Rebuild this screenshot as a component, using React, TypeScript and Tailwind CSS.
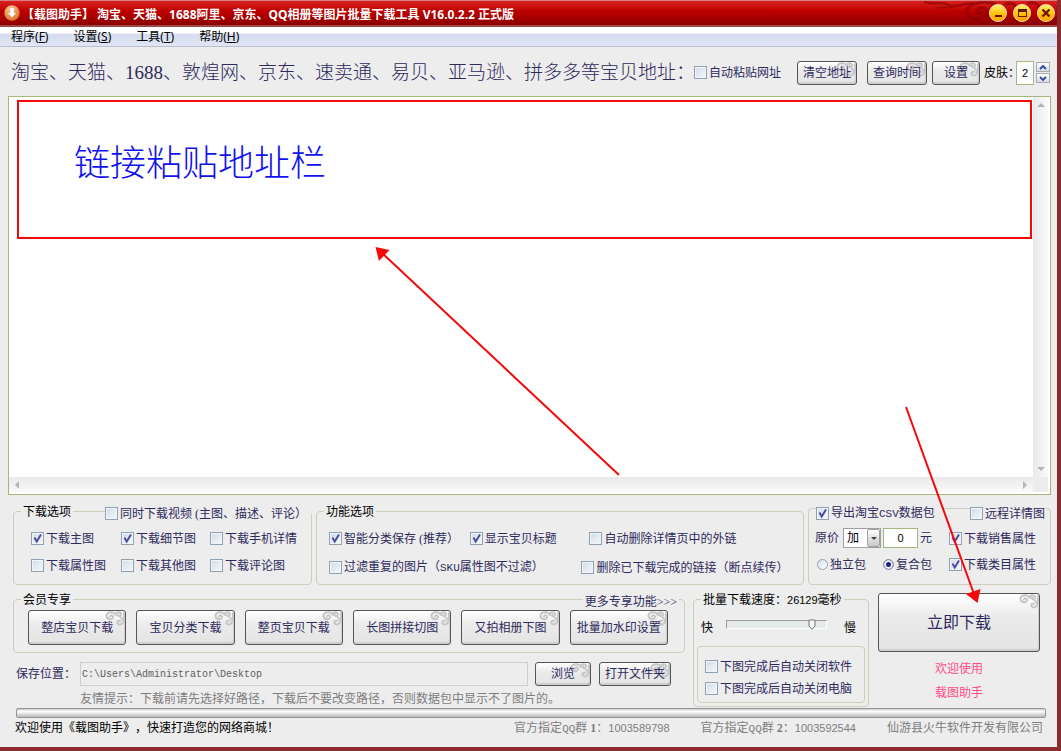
import React, { useState } from "react";

const FONT =
  "font-['Liberation_Serif','Noto_Sans_CJK_SC',sans-serif]";
const UI_FONT = "font-['Noto_Sans','Noto_Sans_CJK_SC',sans-serif]";

function Mono({ children }: { children: React.ReactNode }) {
  return <span className="font-['Liberation_Mono',monospace] text-[11px]">{children}</span>;
}

function Num({ children }: { children: React.ReactNode }) {
  return <span className="font-['Liberation_Sans',sans-serif] text-[11px]">{children}</span>;
}

function Check({
  children,
  on = false,
  className = "",
}: {
  children: React.ReactNode;
  on?: boolean;
  className?: string;
}) {
  return (
    <label className={`flex items-center gap-[2px] whitespace-nowrap leading-4 text-[#2e2a5c] ${className}`}>
      <span className="relative block size-[13px] shrink-0">
        <input
          type="checkbox"
          defaultChecked={on}
          className="peer block size-[13px] appearance-none border border-[#8fa1b3] bg-linear-to-br from-[#cfdce8] to-[#f6f8fb] shadow-[inset_0_0_0_1px_#f2f4f6]"
        />
        <svg
          viewBox="0 0 13 13"
          className="pointer-events-none absolute inset-0 hidden size-[13px] peer-checked:block"
        >
          <path d="M3.5 5.5 L5.7 9.5 L10 2.5" fill="none" stroke="#4b4a9c" strokeWidth="1.9" />
        </svg>
      </span>
      <span className="pt-px">{children}</span>
    </label>
  );
}

function Radio({ children, on = false }: { children: React.ReactNode; on?: boolean }) {
  return (
    <label className="flex items-center gap-px whitespace-nowrap leading-4 text-[#2e2a5c]">
      <input
        type="radio"
        name="package"
        defaultChecked={on}
        className="m-px size-[11px] shrink-0 appearance-none rounded-full border border-[#8fa1b3] bg-linear-to-br from-[#d5e0ea] to-white checked:bg-none checked:bg-[#23227a] checked:shadow-[inset_0_0_0_2px_#eef1f5]"
      />
      <span className="pt-px">{children}</span>
    </label>
  );
}

function Clouds() {
  return (
    <svg viewBox="0 0 20 15" className="absolute top-0 right-0 h-[15px] w-5" aria-hidden="true">
      <g fill="none" stroke="#c6c6c6" strokeWidth="2" strokeLinecap="round">
        <path d="M11 4 C9.5 0.5 3 0 1.5 4 C1 8.500 7 9.500 8 6.500 C8.500 4.200 5.500 3.500 5 5.500" />
        <path d="M10.500 3 C11.500 0.500 16 0.500 16 3.500 C15.500 6 12.500 5.500 13.200 3.500" />
        <path d="M18.800 2.500 C19.500 7 19 13 15 13.500 C11 13 12 8.800 15.200 9.800" />
        <path d="M16 6.500 L17.500 8.500" />
      </g>
    </svg>
  );
}

function Btn({ children, className = "" }: { children: React.ReactNode; className?: string }) {
  return (
    <button
      type="button"
      className={`relative flex items-center justify-center overflow-hidden whitespace-nowrap rounded-[3px] border border-[#555] bg-linear-to-b from-white via-[#ebebeb] via-40% to-[#e4e4e4] text-[#2e2a5c] shadow-[inset_-1px_-2px_1px_#cfcfcf] ${className}`}
    >
      <Clouds />
      <span className="relative">{children}</span>
    </button>
  );
}

function Group({
  label,
  header,
  children,
  className = "",
}: {
  label: string;
  header: React.ReactNode;
  children: React.ReactNode;
  className?: string;
}) {
  return (
    <fieldset
      aria-label={label}
      className={`flex min-w-0 flex-col rounded-[4px] border border-[#cccfba] ${className}`}
    >
      <div className="-mt-2 flex h-4 items-center leading-4">{header}</div>
      {children}
    </fieldset>
  );
}

function Legend({ children }: { children: React.ReactNode }) {
  return <span className="ml-[7px] bg-[#ededed] px-[2px] whitespace-nowrap text-black">{children}</span>;
}

function TitleBar() {
  const round =
    "flex size-[18px] items-center justify-center rounded-full border border-[#ffe9a0] bg-linear-to-b from-[#fff06a] via-[#ffc400] to-[#ff9d00]";
  return (
    <header
      className={`relative -mr-1 flex h-[27px] items-center overflow-hidden rounded-tr-[5px] border-t border-b-2 border-t-[#d98080] border-b-[#9b4a4a] bg-linear-to-b from-[#d92020] via-[#c00000] via-40% to-[#8c0000] pr-[6px] pl-1 text-xs font-bold text-white ${UI_FONT}`}
    >
      <svg viewBox="0 0 16 16" className="size-4 shrink-0" aria-hidden="true">
        <defs>
          <radialGradient id="orb" cx="0.4" cy="0.25" r="0.8">
            <stop offset="0" stopColor="#f8c9a0" />
            <stop offset="1" stopColor="#dd6a1c" />
          </radialGradient>
        </defs>
        <circle cx="8" cy="8" r="7.700" fill="url(#orb)" />
        <path d="M6.300 3 H9.700 V8 H12 L8 12.500 L4 8 H6.300 Z" fill="#fff" />
      </svg>
      <h1 className="ml-[2px] pt-[3px] whitespace-nowrap">
        【载图助手】 淘宝、天猫、1688阿里、京东、QQ相册等图片批量下载工具 V16.0.2.2 正式版
      </h1>
      <svg viewBox="0 0 140 26" className="absolute top-0 right-0 h-[26px] w-[140px]" aria-hidden="true">
        <g fill="none" stroke="#850000" strokeWidth="3" strokeLinecap="round" opacity="0.6">
          <path d="M4 1 C12 4 20 0 28 4 C34 8 42 2 52 2" strokeWidth="2.500" />
          <path d="M16 7 C24 5 28 9 36 4" strokeWidth="1.500" />
          <path d="M74 3 C62 -1 44 3 46 12 C48 20 64 19 66 11 C66 5 56 5 56 11 C57 13 60 13 61 11" />
          <path d="M66 14 C70 20 78 22 84 17 M70 25 C74 20 80 21 84 25 M92 25 C98 18 106 20 108 26 M112 20 C118 24 126 24 136 19" />
          <path d="M84 3 C94 0 100 8 94 14 M108 2 C116 0 120 6 118 12" />
        </g>
      </svg>
      <div className="relative ml-auto flex gap-[6px]">
        <button type="button" aria-label="最小化" className={round}>
          <span className="mt-[6px] h-[2px] w-[7px] bg-[#6b1500]" />
        </button>
        <button type="button" aria-label="最大化" className={round}>
          <span className="h-2 w-[9px] border border-t-[3px] border-[#6b1500]" />
        </button>
        <button type="button" aria-label="关闭" className={round}>
          <svg viewBox="0 0 10 10" className="size-[10px]">
            <path d="M1.500 1.500 L8.500 8.500 M8.500 1.500 L1.500 8.500" stroke="#6b1500" strokeWidth="2.300" />
          </svg>
        </button>
      </div>
    </header>
  );
}

function MenuBar() {
  const items = [
    ["程序", "F"],
    ["设置", "S"],
    ["工具", "T"],
    ["帮助", "H"],
  ];
  return (
    <nav
      className={`flex h-5 items-center gap-[25px] border-b border-[#b9bdd0] bg-linear-to-b from-white from-30% via-[#d5dcee] via-40% to-[#e0e6f5] pl-[11px] text-xs text-black ${UI_FONT}`}
    >
      {items.map(([name, key]) => (
        <button key={key} type="button" className="pt-px leading-4">
          {name}(<u>{key}</u>)
        </button>
      ))}
    </nav>
  );
}

function TopRow() {
  return (
    <div className="flex h-[49px] items-center pt-[2px] pr-[7px] pl-[11px]">
      <label
        htmlFor="links"
        className="w-[683px] shrink-0 whitespace-nowrap text-[19px] leading-6 font-light text-[#2e2a5c]"
      >
        淘宝、天猫、1688、敦煌网、京东、速卖通、易贝、亚马逊、拼多多等宝贝地址：
      </label>
      <Check>自动粘贴网址</Check>
      <div className="ml-auto flex items-center">
        <Btn className="h-6 w-[60px]">清空地址</Btn>
        <Btn className="ml-[10px] h-6 w-[60px]">查询时间</Btn>
        <Btn className="ml-[5px] h-6 w-12">设置</Btn>
        <label htmlFor="skin" className="ml-1 w-8 whitespace-nowrap text-black">
          皮肤：
        </label>
        <input
          id="skin"
          defaultValue="2"
          className="h-6 w-[18px] border border-[#a3b87c] bg-white text-center font-['Liberation_Sans',sans-serif] text-[11px] text-black"
        />
        <div className="ml-[2px] flex flex-col gap-px">
          {["M3 5 L6 2 L9 5", "M3 2 L6 5 L9 2"].map((d, i) => (
            <button
              key={d}
              type="button"
              aria-label={i === 0 ? "增加" : "减少"}
              className="flex h-[10px] w-[14px] items-center justify-center border border-[#a9abb3] bg-linear-to-b from-white to-[#d9dbe3]"
            >
              <svg viewBox="0 0 12 7" className="h-[7px] w-3">
                <path d={d} fill="none" stroke="#2b4a9b" strokeWidth="1.800" />
              </svg>
            </button>
          ))}
        </div>
      </div>
    </div>
  );
}

function Tri({ d }: { d: string }) {
  return (
    <svg viewBox="0 0 8 8" className="size-2" aria-hidden="true">
      <path d={d} fill="#b4b4b4" />
    </svg>
  );
}

function LinkBox() {
  return (
    <div className="relative mr-[6px] ml-2 grid min-h-[240px] flex-1 grid-cols-[1fr_17px] grid-rows-[1fr_17px] border border-[#a3b87c] bg-white">
      <textarea id="links" className="block size-full resize-none bg-white p-1 outline-none" />
      <div className="mr-[2px] flex flex-col items-center justify-between bg-linear-to-r from-[#e9e9e9] to-[#fafafa] py-1">
        <Tri d="M0 6 L4 2 L8 6 Z" />
        <Tri d="M0 2 L4 6 L8 2 Z" />
      </div>
      <div className="mb-[2px] flex items-center justify-between bg-linear-to-b from-[#e9e9e9] to-[#fafafa] px-1">
        <Tri d="M6 0 L2 4 L6 8 Z" />
        <Tri d="M2 0 L6 4 L2 8 Z" />
      </div>
      <div className="mr-[2px] mb-[2px] bg-[#ededed]" />
      <div className="pointer-events-none absolute top-[3px] right-[18px] left-2 flex h-[139px] border-2 border-[#f40808] pt-10 pl-[55px]">
        <span className="whitespace-nowrap text-4xl leading-11 font-light text-[#1010f0]">链接粘贴地址栏</span>
      </div>
    </div>
  );
}

function Options() {
  return (
    <div className="mt-4 mr-[6px] ml-[13px] grid h-[74px] grid-cols-[299fr_488fr_243fr] gap-1">
      <Group
        label="下载选项"
        header={
          <>
            <Legend>下载选项</Legend>
            <Check className="mt-[2px] ml-8 bg-[#ededed] pr-1">同时下载视频 (主图、描述、评论）</Check>
          </>
        }
      >
        <div className="mt-[10px] grid grid-cols-[90fr_89fr_101fr] gap-y-[10px] pl-[17px]">
          <Check on>下载主图</Check>
          <Check on>下载细节图</Check>
          <Check>下载手机详情</Check>
          <Check>下载属性图</Check>
          <Check>下载其他图</Check>
          <Check>下载评论图</Check>
        </div>
      </Group>

      <Group label="功能选项" header={<Legend>功能选项</Legend>}>
        <div className="mt-[10px] grid grid-cols-[141fr_120fr_214fr] pl-3">
          <Check on>智能分类保存 (推荐）</Check>
          <Check on>显示宝贝标题</Check>
          <Check>自动删除详情页中的外链</Check>
        </div>
        <div className="mt-[11px] grid grid-cols-[253fr_222fr] pl-3">
          <Check>
            过滤重复的图片（<Mono>SKU</Mono>属性图不过滤）
          </Check>
          <Check>删除已下载完成的链接（断点续传）</Check>
        </div>
      </Group>

      <Group
        label="导出选项"
        className="-mt-[3px]"
        header={
          <div className="mt-[8px] flex w-full justify-between pr-[5px] pl-[7px]">
            <Check on className="bg-[#ededed] pr-2">
              导出淘宝<Mono>CSV</Mono>数据包
            </Check>
            <Check className="bg-[#ededed]">远程详情图</Check>
          </div>
        }
      >
        <div className="mt-[11px] flex h-5 items-center pr-[14px] pl-[6px] text-[#2e2a5c]">
          <label htmlFor="op" className="whitespace-nowrap">
            原价
          </label>
          <span className="relative ml-1 block">
            <select
              id="op"
              className="block h-5 w-[38px] appearance-none border border-[#9aa0a8] bg-white pl-[3px] text-xs text-black"
            >
              <option>加</option>
              <option>减</option>
            </select>
            <span className="pointer-events-none absolute top-px right-px flex h-[18px] w-[13px] items-center justify-center rounded-[2px] border border-[#a0a0a0] bg-linear-to-b from-white to-[#c9c9c9]">
              <svg viewBox="0 0 6 3" className="h-[3px] w-[6px]">
                <path d="M0 0 H6 L3 3 Z" fill="#444" />
              </svg>
            </span>
          </span>
          <input
            aria-label="金额"
            defaultValue="0"
            className="ml-[2px] h-5 w-[35px] border border-[#a3b87c] bg-white text-center font-['Liberation_Sans',sans-serif] text-[11px] text-black"
          />
          <span className="ml-[2px]">元</span>
          <Check on className="ml-auto">
            下载销售属性
          </Check>
        </div>
        <div className="mt-[8px] flex items-center pr-[14px] pl-[7px]">
          <Radio>独立包</Radio>
          <span className="ml-4">
            <Radio on>复合包</Radio>
          </span>
          <Check on className="ml-auto">
            下载类目属性
          </Check>
        </div>
      </Group>
    </div>
  );
}

function Members() {
  const names = ["整店宝贝下载", "宝贝分类下载", "整页宝贝下载", "长图拼接切图", "又拍相册下图", "批量加水印设置"];
  return (
    <div className="flex min-w-0 flex-col">
      <Group
        label="会员专享"
        header={
          <>
            <Legend>会员专享</Legend>
            <a href="#more" className="mt-1 mr-[5px] ml-auto bg-[#ededed] px-[2px] whitespace-nowrap text-[#2e2a5c]">
              更多专享功能&gt;&gt;&gt;
            </a>
          </>
        }
      >
        <div className="mt-[2px] grid grid-cols-6 gap-[10px] pr-4 pb-[7px] pl-[14px]">
          {names.map((n) => (
            <Btn key={n} className="h-[35px]">
              {n}
            </Btn>
          ))}
        </div>
      </Group>
      <div className="mt-[9px] flex items-center pr-[14px] pl-[3px]">
        <label htmlFor="path" className="w-16 shrink-0 whitespace-nowrap text-[#2e2a5c]">
          保存位置：
        </label>
        <input
          id="path"
          readOnly
          defaultValue="C:\Users\Administrator\Desktop"
          className="h-6 min-w-0 flex-1 border border-[#cfcfcf] bg-[#ededed] px-px font-['Liberation_Mono',monospace] text-[10px] text-[#606060]"
        />
        <Btn className="ml-[7px] h-6 w-14">浏览</Btn>
        <Btn className="ml-2 h-6 w-[72px]">打开文件夹</Btn>
      </div>
      <p className="mt-[5px] ml-[67px] leading-4 whitespace-nowrap text-[#7d7d7d]">
        友情提示：下载前请先选择好路径，下载后不要改变路径，否则数据包中显示不了图片的。
      </p>
    </div>
  );
}

function Speed() {
  const [speed, setSpeed] = useState(87);
  return (
    <Group
      label="批量下载速度"
      header={
        <Legend>
          批量下载速度：<Num>26129</Num>毫秒
        </Legend>
      }
    >
      <div className="mt-3 flex items-center pr-3 pl-[7px] text-black">
        <span>快</span>
        <div className="relative mx-[13px] h-4 min-w-0 flex-1">
          <input
            type="range"
            aria-label="下载速度"
            value={speed}
            onChange={(e) => setSpeed(Number(e.target.value))}
            className="block h-[9px] w-full appearance-none border border-t-[#9a9a9a] border-r-white border-b-white border-l-[#9a9a9a] bg-[#e4e9ea] [&::-webkit-slider-thumb]:appearance-none [&::-webkit-slider-thumb]:opacity-0"
          />
          <svg
            viewBox="0 0 8 11"
            className="pointer-events-none absolute -top-px -ml-[6px] h-[11px] w-2"
            style={{ left: `${speed}%` }}
          >
            <path d="M1 1 H7 V7 L4 10.300 L1 7 Z" fill="#f4f4f4" stroke="#777" />
          </svg>
        </div>
        <span className="ml-1">慢</span>
      </div>
      <div className="mx-[3px] mt-auto mb-[3px] flex h-[57px] flex-col gap-[5px] rounded-[4px] border border-[#cccfba] pt-[11px] pl-[7px]">
        <Check>下图完成后自动关闭软件</Check>
        <Check>下图完成后自动关闭电脑</Check>
      </div>
    </Group>
  );
}

export default function App() {
  return (
    <div
      className={`relative flex min-h-screen flex-col overflow-hidden border-r-4 border-b-4 border-[#8c2a2e] bg-[#ededed] text-xs [text-spacing-trim:space-all] ${FONT}`}
    >
      <TitleBar />
      <MenuBar />
      <TopRow />
      <LinkBox />
      <Options />
      <div className="mt-[14px] mr-[6px] ml-[13px] grid h-[105px] grid-cols-[672fr_176fr_174fr] gap-2">
        <Members />
        <Speed />
        <div className="-mt-[6px] flex flex-col pr-[11px] pl-px">
          <Btn className="h-[59px] text-base">立即下载</Btn>
          <p className="mt-[9px] text-center leading-4 text-[#ff4d88]">欢迎使用</p>
          <p className="mt-2 text-center leading-4 text-[#ff4d88]">载图助手</p>
        </div>
      </div>
      <div className="mt-1 mr-[11px] ml-4 h-[10px] rounded-[2px] border border-[#959595] bg-linear-to-b from-[#c9c9c9] via-white via-30% to-[#b9b9b9]" />
      <footer className="flex h-[29px] pt-[2px] pr-[14px] pl-[15px] leading-4 whitespace-nowrap text-[#7d7d7d]">
        <span className="text-black">欢迎使用《载图助手》，快速打造您的网络商城！</span>
        <div className="ml-auto flex gap-[31px]">
          <span>
            官方指定<Mono>QQ</Mono>群 <b>1</b>：<Num>1003589798</Num>
          </span>
          <span>
            官方指定<Mono>QQ</Mono>群 <b>2</b>：<Num>1003592544</Num>
          </span>
          <span>仙游县火牛软件开发有限公司</span>
        </div>
      </footer>
      <svg
        viewBox="0 0 1061 751"
        className="pointer-events-none absolute top-0 left-0 h-[751px] w-[1061px]"
        aria-hidden="true"
      >
        <g stroke="#f50808" strokeWidth="2" fill="#f50808">
          <path d="M619 475 L382 253" />
          <path d="M375.500 247 L389.500 250 L379 261 Z" strokeWidth="0" />
          <path d="M906 407 L974 594" />
          <path d="M977.500 603 L966 594 L980.500 589 Z" strokeWidth="0" />
        </g>
      </svg>
    </div>
  );
}
